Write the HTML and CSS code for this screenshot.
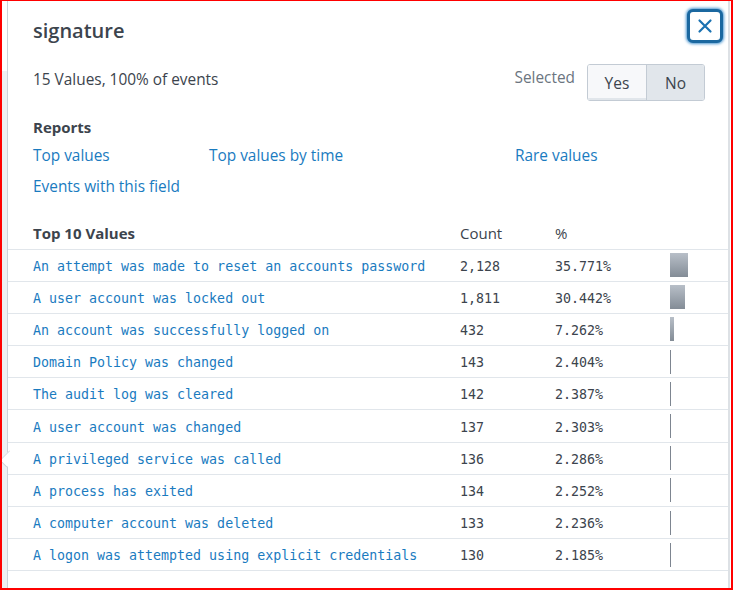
FILE: index.html
```html
<!DOCTYPE html>
<html>
<head>
<meta charset="utf-8">
<link rel="stylesheet" href="styles.css">
</head>
<body>
<div class="frame">
  <div class="panel">
    <button class="close" aria-label="Close">
      <svg width="16" height="16" viewBox="0 0 16 16"><path d="M2.5 2.5 L13.5 13.5 M13.5 2.5 L2.5 13.5" stroke="#1a72b2" stroke-width="2.2" stroke-linecap="round" fill="none"/></svg>
    </button>
    <div class="head">
      <h1 class="title">signature</h1>
      <div class="summary">
        <span class="count-text">15 Values, 100% of events</span>
        <div class="selected">
          <span class="sel-label">Selected</span>
          <div class="toggle">
            <span class="tbtn yes">Yes</span>
            <span class="tbtn no active">No</span>
          </div>
        </div>
      </div>
    </div>
    <div class="reports">
      <div class="rep-title">Reports</div>
      <div class="rep-grid">
        <a class="link">Top values</a>
        <a class="link">Top values by time</a>
        <a class="link">Rare values</a>
        <a class="link">Events with this field</a>
      </div>
    </div>
    <table class="values">
      <thead>
        <tr><th class="c-val">Top 10 Values</th><th class="c-cnt">Count</th><th class="c-pct">%</th><th class="c-bar"></th></tr>
      </thead>
      <tbody>
        <tr><td class="c-val"><a class="v">An attempt was made to reset an accounts password</a></td><td class="c-cnt">2,128</td><td class="c-pct">35.771%</td><td class="c-bar"><span class="bar" style="width:18px"></span></td></tr>
        <tr><td class="c-val"><a class="v">A user account was locked out</a></td><td class="c-cnt">1,811</td><td class="c-pct">30.442%</td><td class="c-bar"><span class="bar" style="width:15px"></span></td></tr>
        <tr><td class="c-val"><a class="v">An account was successfully logged on</a></td><td class="c-cnt">432</td><td class="c-pct">7.262%</td><td class="c-bar"><span class="bar" style="width:4px"></span></td></tr>
        <tr><td class="c-val"><a class="v">Domain Policy was changed</a></td><td class="c-cnt">143</td><td class="c-pct">2.404%</td><td class="c-bar"><span class="bar thin"></span></td></tr>
        <tr><td class="c-val"><a class="v">The audit log was cleared</a></td><td class="c-cnt">142</td><td class="c-pct">2.387%</td><td class="c-bar"><span class="bar thin"></span></td></tr>
        <tr><td class="c-val"><a class="v">A user account was changed</a></td><td class="c-cnt">137</td><td class="c-pct">2.303%</td><td class="c-bar"><span class="bar thin"></span></td></tr>
        <tr><td class="c-val"><a class="v">A privileged service was called</a></td><td class="c-cnt">136</td><td class="c-pct">2.286%</td><td class="c-bar"><span class="bar thin"></span></td></tr>
        <tr><td class="c-val"><a class="v">A process has exited</a></td><td class="c-cnt">134</td><td class="c-pct">2.252%</td><td class="c-bar"><span class="bar thin"></span></td></tr>
        <tr><td class="c-val"><a class="v">A computer account was deleted</a></td><td class="c-cnt">133</td><td class="c-pct">2.236%</td><td class="c-bar"><span class="bar thin"></span></td></tr>
        <tr><td class="c-val"><a class="v">A logon was attempted using explicit credentials</a></td><td class="c-cnt">130</td><td class="c-pct">2.185%</td><td class="c-bar"><span class="bar thin"></span></td></tr>
      </tbody>
    </table>
    <span class="arrow"></span>
  </div>
</div>
</body>
</html>
```
FILE: styles.css
```css
* { box-sizing: border-box; }
html, body { margin: 0; padding: 0; background: #fff; }
body { font-family: "Open Sans", Lato, sans-serif; color: #3c444d; }

.frame {
  width: 733px;
  height: 590px;
  border-top: 1px solid #f00;
  border-left: 2px solid #f00;
  border-bottom: 2px solid #f00;
  border-right: 2px solid #f00;
  padding-left: 5px;
  padding-right: 1px;
  background: linear-gradient(to bottom, #fff 0, #fff 70px, #eef0f2 70px) left top / 5px 100% no-repeat, #fff;
  overflow: hidden;
}

.panel {
  position: relative;
  height: 100%;
  background: #fff;
  border-left: 1px solid #cdd2d8;
  border-right: 2px solid #dde1e5;
}

.close {
  position: absolute;
  top: 8px;
  right: 5px;
  width: 36px;
  height: 34px;
  padding: 0;
  background: #fff;
  border: 3px solid #1b68a0;
  border-radius: 6px;
  box-shadow: 0 0 3px 1px #4a95cf;
  display: flex;
  align-items: center;
  justify-content: center;
}

.head { padding: 17px 23px 0 25px; }
.title {
  margin: 0;
  font-size: 20px;
  font-weight: 600;
  line-height: 26px;
  color: #3c444d;
}
.summary {
  display: flex;
  align-items: center;
  justify-content: space-between;
  margin-top: 20px;
}
.count-text { font-size: 15.4px; color: #3c444d; margin-top: -6px; }
.selected { display: flex; align-items: center; gap: 12px; }
.sel-label { font-size: 15.4px; color: #6b7580; margin-top: -11px; }
.toggle {
  display: flex;
  border: 1px solid #c3cbd4;
  border-radius: 3px;
  overflow: hidden;
  height: 37px;
}
.tbtn {
  display: flex;
  align-items: center;
  justify-content: center;
  font-size: 15.5px;
  color: #3c444d;
  background: #f7f8fa;
  box-shadow: inset 0 -2px 0 #e1e6eb;
}
.tbtn.yes { width: 59px; border-right: 1px solid #c3cbd4; }
.tbtn.no { width: 57px; }
.tbtn.active { background: #e1e6eb; box-shadow: none; }

.reports { padding: 16px 25px 0 25px; }
.rep-title { font-size: 15px; font-weight: 700; line-height: 20px; }
.rep-grid {
  display: grid;
  grid-template-columns: 176px 306px auto;
  row-gap: 11px;
  margin-top: 9px;
}
.link { font-size: 15.4px; color: #1a7bbf; line-height: 20px; cursor: pointer; }

.values {
  width: 100%;
  border-collapse: collapse;
  margin-top: 21px;
}
.values th {
  text-align: left;
  font-size: 15px;
  font-weight: 400;
  height: 31px;
  padding: 0;
  vertical-align: middle;
  border-bottom: 1px solid #e1e6eb;
}
.values th.c-val { font-weight: 700; }
.values td {
  height: 32.2px;
  padding: 2px 0 0 0;
  vertical-align: middle;
  border-bottom: 1px solid #e1e6eb;
  font-family: "DejaVu Sans Mono", monospace;
  font-size: 13.3px;
  color: #3c444d;
}
.c-val { padding-left: 25px !important; width: 452px; }
.c-cnt { width: 95px; }
.c-pct { width: 115px; }
.v { color: #1a7bbf; cursor: pointer; }
.bar {
  display: block;
  height: 24px;
  margin-top: -2px;
  background: linear-gradient(to bottom, #b8bfc8, #838c96);
}
.bar.thin { width: 1px; background: #7d8590; }

.arrow {
  position: absolute;
  left: -7px;
  top: 451px;
  width: 14px;
  height: 14px;
  background: #fff;
  border-left: 1px solid #cdd2d8;
  border-bottom: 1px solid #cdd2d8;
  transform: rotate(45deg) scale(0.7, 1.0);
}
```
